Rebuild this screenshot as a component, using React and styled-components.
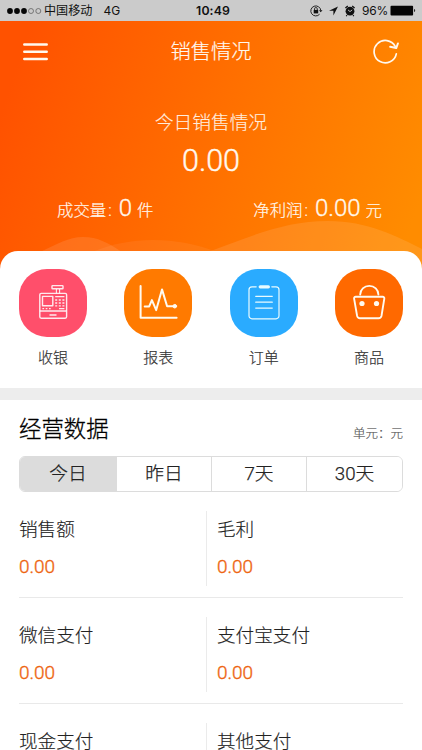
import React, { useState } from "react";
import styled, { createGlobalStyle } from "styled-components";

const GlobalStyle = createGlobalStyle`
  * { box-sizing: border-box; }
  html, body { margin: 0; padding: 0; overflow: hidden; }
  body { background: #fff; font-family: Roboto, "Noto Sans CJK SC", sans-serif; color: #333; }
  button { font: inherit; color: inherit; border: 0; padding: 0; margin: 0; background: none; }
`;

const Screen = styled.div`
  width: 422px;
  height: 750px;
  overflow: hidden;
  background: #fff;
  font-weight: 300;
`;

const StatusBar = styled.div`
  height: 21px;
  padding: 0 6px 0 7px;
  display: grid;
  grid-template-columns: 1fr auto 1fr;
  align-items: center;
  background: #cbcbcb;
  color: #111;
  font: 400 12px/21px Inter, "Noto Sans CJK SC", sans-serif;
`;

const StatusGroup = styled.div`
  display: flex;
  align-items: center;
  justify-content: ${(p) => (p.$end ? "flex-end" : "flex-start")};
  white-space: nowrap;
  svg { flex: none; }
`;

const Carrier = styled.span`
  margin: 0 11px 0 2px;
  font-size: 12.1px;
`;

const Clock = styled.span`
  padding-left: 3px;
  font-weight: 600;
  font-size: 12.3px;
  letter-spacing: 0.1px;
`;

const Percent = styled.span`
  margin: 0 2px 0 6px;
  letter-spacing: -0.25px;
`;

const Hero = styled.header`
  position: relative;
  height: 268px;
  color: #fff8ee;
  background: linear-gradient(108deg, #ff5200 6%, #ff6c00 45%, #ff8c00 94%);
`;

const Waves = styled.svg`
  position: absolute;
  left: 0;
  top: 190px;
`;

const NavBar = styled.div`
  height: 60px;
  padding: 0 23px;
  display: flex;
  align-items: center;
  justify-content: space-between;
`;

const NavButton = styled.button`
  width: 26px;
  height: 26px;
  svg { display: block; }
`;

const NavTitle = styled.h1`
  margin: 0;
  padding-top: 2px;
  font-size: 20.3px;
  font-weight: 300;
  line-height: 58px;
  -webkit-text-stroke: 0.2px;
`;

const Summary = styled.div`
  display: flex;
  flex-direction: column;
  align-items: center;
  padding-top: 28px;
`;

const SummaryLabel = styled.div`
  font-size: 18.7px;
  line-height: 28px;
  opacity: 0.92;
  -webkit-text-stroke: 0.15px;
`;

const SummaryValue = styled.div`
  font-size: 30.5px;
  line-height: 36px;
  margin-top: 6px;
  font-weight: 300;
  -webkit-text-stroke: 0.4px;
`;

const Metrics = styled.div`
  align-self: stretch;
  display: flex;
  justify-content: space-between;
  margin-top: 12px;
  padding: 0 40px 0 57px;
`;

const Metric = styled.div`
  display: flex;
  align-items: baseline;
  font-size: 16.4px;
  line-height: 34px;
  -webkit-text-stroke: 0.2px;
`;

const Colon = styled.span`
  padding: 0 2px;
`;

const MetricValue = styled.span`
  font-size: 24px;
  font-weight: 300;
  margin: 0 5px;
  -webkit-text-stroke: 0.35px;
`;

const Shortcuts = styled.nav`
  position: relative;
  height: 137px;
  margin-top: -38px;
  padding: 18px 19px 0;
  display: flex;
  justify-content: space-between;
  background: #fff;
  border-radius: 18px 18px 0 0;
`;

const Shortcut = styled.button`
  display: flex;
  flex-direction: column;
  align-items: center;
  width: 68px;
  font-size: 15px;
  line-height: 22px;
  -webkit-text-stroke: 0.2px;
`;

const Tile = styled.span`
  display: block;
  width: 68px;
  height: 68px;
  margin-bottom: 10px;
  border-radius: 28px;
  background: ${(p) => p.$color};
  svg { display: block; }
`;

const Band = styled.div`
  height: 12px;
  background: #ededed;
`;

const Data = styled.section`
  padding: 0 19px;
`;

const DataHead = styled.div`
  height: 56px;
  display: flex;
  justify-content: space-between;
`;

const DataTitle = styled.h2`
  margin: 0;
  font-size: 22.4px;
  line-height: 58px;
  font-weight: 300;
  color: #000;
  -webkit-text-stroke: 0.3px;
`;

const Unit = styled.span`
  font-size: 12.5px;
  line-height: 68px;
  color: #555;
  -webkit-text-stroke: 0.15px;
`;

const Tabs = styled.div`
  display: grid;
  grid-template-columns: 96px 95px 95px 1fr;
  height: 36px;
  border: 1px solid #dcdcdc;
  border-radius: 6px;
  overflow: hidden;
`;

const Tab = styled.button`
  font-size: 18.7px;
  line-height: 32px;
  color: #222;
  -webkit-text-stroke: 0.25px;
  background: ${(p) => (p.$active ? "#dcdcdc" : "#fff")};
  & + & { border-left: 1px solid #dcdcdc; }
`;

const Row = styled.div`
  display: grid;
  grid-template-columns: 187px 1fr;
  height: 106px;
  padding-top: 19px;
  border-bottom: 1px solid #e9e9e9;
`;

const Cell = styled.div`
  height: 75px;
  padding-left: ${(p) => (p.$divided ? 10 : 0)}px;
  border-left: ${(p) => (p.$divided ? "1px solid #ebebeb" : "0")};
`;

const CellLabel = styled.div`
  font-size: 18.6px;
  line-height: 28px;
  padding-top: 5px;
  color: #222;
  -webkit-text-stroke: 0.15px;
`;

const CellValue = styled.div`
  margin-top: 9px;
  font-size: 19px;
  line-height: 28px;
  font-weight: 300;
  color: #ee6512;
  -webkit-text-stroke: 0.4px;
`;

const SignalDots = () => (
  <svg width="35" height="8" viewBox="0 0 35 8">
    {[3, 10, 17].map((x) => <circle key={x} cx={x} cy="4" r="2.9" fill="#050505" />)}
    {[24, 31.3].map((x) => <circle key={x} cx={x} cy="4" r="2.5" fill="none" stroke="#555" strokeWidth=".7" />)}
  </svg>
);

const StatusIcons = () => (
  <svg width="46" height="14" viewBox="0 0 46 14" fill="none" stroke="#111">
    <path d="M9.6 10.2A5 5 0 1 1 10.8 6.5" strokeWidth=".9" />
    <path d="M9 6.2h3.5l-1.8 2.1z" fill="#111" stroke="none" />
    <rect x="3.7" y="5.9" width="4.5" height="3.5" fill="#111" stroke="none" />
    <path d="M4.5 6.1V4.9a1.4 1.4 0 0 1 2.8 0v1.2" strokeWidth=".8" />
    <path d="M28 2.6 19 6.8h4.4v4.6z" fill="#111" stroke="none" />
    <circle cx="40" cy="7.2" r="4.4" fill="#111" stroke="none" />
    <path d="m35.4 4.1 2.4-2M44.6 4.1l-2.4-2M37 11.3l-.8.8M43 11.3l.8.8" strokeWidth="1.3" />
    <path d="m38 5.9 2 1.7 2.2-1.7" stroke="#cbcbcb" strokeWidth=".9" />
  </svg>
);

const Battery = () => (
  <svg width="26" height="11" viewBox="0 0 26 11">
    <rect x=".5" y=".7" width="22.6" height="9.7" rx="1" fill="#050505" />
    <path d="M24 4c1.6.3 1.6 2.8 0 3z" fill="#222" />
  </svg>
);

const MenuIcon = () => (
  <svg width="26" height="26" viewBox="0 0 26 26" stroke="currentColor" strokeWidth="2.5" strokeLinecap="round">
    <path d="M1.3 6.5h22.4M1.3 13.8h22.4M1.3 21h22.4" />
  </svg>
);

const RefreshIcon = () => (
  <svg width="26" height="26" viewBox="0 0 26 26" fill="none" stroke="currentColor" strokeWidth="1.7" strokeLinecap="round" strokeLinejoin="round">
    <path d="M23.3 15.8A11.2 11.2 0 1 1 22.2 8.4" />
    <path d="m17.2 8.8 6 1.3 1.7-4.6" strokeWidth="2" />
  </svg>
);

const RegisterIcon = () => (
  <svg width="68" height="68" viewBox="0 0 68 68" fill="none" stroke="#fff" strokeOpacity=".88" strokeWidth="1.4" strokeLinejoin="round">
    <rect x="20.8" y="24.4" width="26.8" height="24.8" rx="1.4" />
    <path d="M20.8 42h26.8M30.5 46h7" />
    <rect x="23.5" y="27.4" width="10.3" height="9.4" />
    <rect x="33" y="16.6" width="11" height="3.2" rx=".6" />
    <path d="M37.4 20v4.4M40.6 20v4.4" strokeWidth="1.1" />
    <path d="M36.2 27.7h9.2M36.2 31h2m1.6 0h2m1.6 0h2M36.2 34h2m1.6 0h2m1.6 0h2M36.2 36.8h2m1.6 0h2m1.6 0h2M23.4 39.6h1.7m1.6 0h1.7m1.6 0h1.7M40 39.7h5.4" strokeWidth="1.3" />
  </svg>
);

const ReportIcon = () => (
  <svg width="68" height="68" viewBox="0 0 68 68" fill="none" stroke="#fffaf0" strokeWidth="2" strokeLinecap="round" strokeLinejoin="round">
    <path d="M16.6 17v31.7h36" />
    <path d="M20.7 37.4h4.5l2.7-6.3 4.3 10 5.8-20.7 5.1 16.9h7" />
    <circle cx="50.8" cy="37.2" r="1.8" fill="#fffaf0" strokeWidth="1" />
  </svg>
);

const OrderIcon = () => (
  <svg width="68" height="68" viewBox="0 0 68 68" fill="none" stroke="#e9fbff" strokeWidth="1.2" strokeLinecap="round">
    <path d="M26.2 17.8H22a3 3 0 0 0-3 3v26a3 3 0 0 0 3 3h24a3 3 0 0 0 3-3v-26a3 3 0 0 0-3-3h-4.2" />
    <path d="M30.2 17.8h8.2" strokeWidth="3.2" />
    <path d="M25.7 27.3h16.6M25.7 33.2h16.6M25.7 39.1h16.6" />
  </svg>
);

const GoodsIcon = () => (
  <svg width="68" height="68" viewBox="0 0 68 68" fill="none" stroke="#fffaf0" strokeWidth="1.9" strokeLinecap="round" strokeLinejoin="round">
    <path d="M20.7 27.8h27c1.2 0 1.8.7 1.6 1.8l-2.8 17.3a3 3 0 0 1-2.9 2.4H25a3 3 0 0 1-2.9-2.4l-3-17.3c-.2-1.1.4-1.8 1.6-1.8Z" />
    <path d="M25.2 25.6c0-4.9 4-8.7 9.1-8.7s9.1 3.8 9.1 8.7" />
    <circle cx="27" cy="34.5" r="2.6" fill="#fffaf0" stroke="none" />
    <circle cx="41.5" cy="34.5" r="2.6" fill="#fffaf0" stroke="none" />
  </svg>
);

const shortcuts = [
  { label: "收银", color: "#ff4f6b", Icon: RegisterIcon },
  { label: "报表", color: "#ff7a00", Icon: ReportIcon },
  { label: "订单", color: "#2aabff", Icon: OrderIcon },
  { label: "商品", color: "#ff6900", Icon: GoodsIcon },
];

const metrics = [
  { label: "成交量", value: "0", unit: "件" },
  { label: "净利润", value: "0.00", unit: "元" },
];

const periods = ["今日", "昨日", "7天", "30天"];

const rows = [
  [["销售额", "0.00"], ["毛利", "0.00"]],
  [["微信支付", "0.00"], ["支付宝支付", "0.00"]],
  [["现金支付", "0.00"], ["其他支付", "0.00"]],
];

export default function App() {
  const [period, setPeriod] = useState(0);
  return (
    <Screen>
      <GlobalStyle />
      <StatusBar>
        <StatusGroup>
          <SignalDots />
          <Carrier>中国移动</Carrier>
          <span>4G</span>
        </StatusGroup>
        <Clock>10:49</Clock>
        <StatusGroup $end>
          <StatusIcons />
          <Percent>96%</Percent>
          <Battery />
        </StatusGroup>
      </StatusBar>

      <Hero>
        <Waves width="422" height="60" viewBox="0 0 422 60" fill="#fff">
          <path d="M40 41C58 33 68 26 83 26S108 32 122 41z" fillOpacity=".1" />
          <path d="M92 41C132 24 178 26 217 41z" fillOpacity=".06" />
          <path d="M208 41C254 24 286 10 328 10 368 10 396 25 422 38V60H208z" fillOpacity=".1" />
        </Waves>
        <NavBar>
          <NavButton aria-label="菜单"><MenuIcon /></NavButton>
          <NavTitle>销售情况</NavTitle>
          <NavButton aria-label="刷新"><RefreshIcon /></NavButton>
        </NavBar>
        <Summary>
          <SummaryLabel>今日销售情况</SummaryLabel>
          <SummaryValue>0.00</SummaryValue>
          <Metrics>
            {metrics.map(({ label, value, unit }) => (
              <Metric key={label}>
                {label}<Colon>:</Colon>
                <MetricValue>{value}</MetricValue>
                {unit}
              </Metric>
            ))}
          </Metrics>
        </Summary>
      </Hero>

      <Shortcuts>
        {shortcuts.map(({ label, color, Icon }) => (
          <Shortcut key={label}>
            <Tile $color={color}><Icon /></Tile>
            {label}
          </Shortcut>
        ))}
      </Shortcuts>
      <Band />

      <Data>
        <DataHead>
          <DataTitle>经营数据</DataTitle>
          <Unit>单元：元</Unit>
        </DataHead>
        <Tabs>
          {periods.map((name, i) => (
            <Tab key={name} $active={i === period} onClick={() => setPeriod(i)}>{name}</Tab>
          ))}
        </Tabs>
        {rows.map((cells) => (
          <Row key={cells[0][0]}>
            {cells.map(([label, value], i) => (
              <Cell key={label} $divided={i > 0}>
                <CellLabel>{label}</CellLabel>
                <CellValue>{value}</CellValue>
              </Cell>
            ))}
          </Row>
        ))}
      </Data>
    </Screen>
  );
}
